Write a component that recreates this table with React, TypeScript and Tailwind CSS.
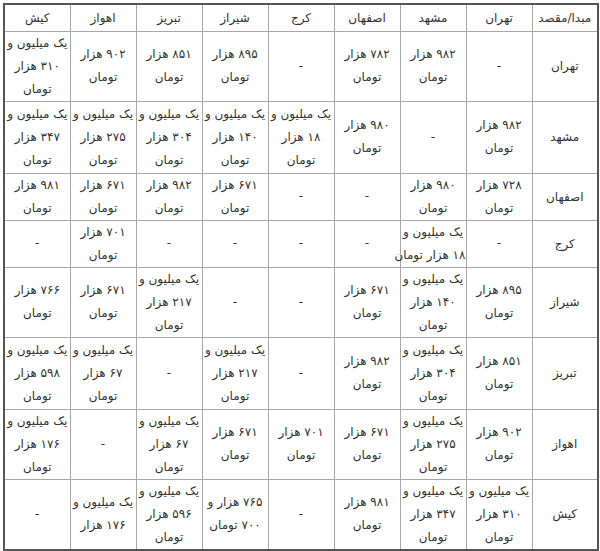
const cities = ["تهران", "مشهد", "اصفهان", "کرج", "شیراز", "تبریز", "اهواز", "کیش"];

// each cell is a list of lines; "-" means no route
const rows: { city: string; h: string; cells: string[][] }[] = [
  {
    city: "تهران",
    h: "h-[69px]",
    cells: [
      ["-"],
      ["۹۸۲ هزار", "تومان"],
      ["۷۸۲ هزار", "تومان"],
      ["-"],
      ["۸۹۵ هزار", "تومان"],
      ["۸۵۱ هزار", "تومان"],
      ["۹۰۲ هزار", "تومان"],
      ["یک میلیون و", "۳۱۰ هزار", "تومان"],
    ],
  },
  {
    city: "مشهد",
    h: "h-[72px]",
    cells: [
      ["۹۸۲ هزار", "تومان"],
      ["-"],
      ["۹۸۰ هزار", "تومان"],
      ["یک میلیون و", "۱۸ هزار", "تومان"],
      ["یک میلیون و", "۱۴۰ هزار", "تومان"],
      ["یک میلیون و", "۳۰۴ هزار", "تومان"],
      ["یک میلیون و", "۲۷۵ هزار", "تومان"],
      ["یک میلیون و", "۳۴۷ هزار", "تومان"],
    ],
  },
  {
    city: "اصفهان",
    h: "h-[46px]",
    cells: [
      ["۷۲۸ هزار", "تومان"],
      ["۹۸۰ هزار", "تومان"],
      ["-"],
      ["-"],
      ["۶۷۱ هزار", "تومان"],
      ["۹۸۲ هزار", "تومان"],
      ["۶۷۱ هزار", "تومان"],
      ["۹۸۱ هزار", "تومان"],
    ],
  },
  {
    city: "کرج",
    h: "h-[47px]",
    cells: [
      ["-"],
      ["یک میلیون و", "۱۸ هزار تومان"],
      ["-"],
      ["-"],
      ["-"],
      ["-"],
      ["۷۰۱ هزار", "تومان"],
      ["-"],
    ],
  },
  {
    city: "شیراز",
    h: "h-[70px]",
    cells: [
      ["۸۹۵ هزار", "تومان"],
      ["یک میلیون و", "۱۴۰ هزار", "تومان"],
      ["۶۷۱ هزار", "تومان"],
      ["-"],
      ["-"],
      ["یک میلیون و", "۲۱۷ هزار", "تومان"],
      ["۶۷۱ هزار", "تومان"],
      ["۷۶۶ هزار", "تومان"],
    ],
  },
  {
    city: "تبریز",
    h: "h-[72px]",
    cells: [
      ["۸۵۱ هزار", "تومان"],
      ["یک میلیون و", "۳۰۴ هزار", "تومان"],
      ["۹۸۲ هزار", "تومان"],
      ["-"],
      ["یک میلیون و", "۲۱۷ هزار", "تومان"],
      ["-"],
      ["یک میلیون و", "۶۷ هزار", "تومان"],
      ["یک میلیون و", "۵۹۸ هزار", "تومان"],
    ],
  },
  {
    city: "اهواز",
    h: "h-[70px]",
    cells: [
      ["۹۰۲ هزار", "تومان"],
      ["یک میلیون و", "۲۷۵ هزار", "تومان"],
      ["۶۷۱ هزار", "تومان"],
      ["۷۰۱ هزار", "تومان"],
      ["۶۷۱ هزار", "تومان"],
      ["یک میلیون و", "۶۷ هزار", "تومان"],
      ["-"],
      ["یک میلیون و", "۱۷۶ هزار", "تومان"],
    ],
  },
  {
    city: "کیش",
    h: "h-[70px]",
    cells: [
      ["یک میلیون و", "۳۱۰ هزار", "تومان"],
      ["یک میلیون و", "۳۴۷ هزار", "تومان"],
      ["۹۸۱ هزار", "تومان"],
      ["-"],
      ["۷۶۵ هزار و", "۷۰۰ تومان"],
      ["یک میلیون و", "۵۹۶ هزار", "تومان"],
      ["یک میلیون و", "۱۷۶ هزار"],
      ["-"],
    ],
  },
];

const cell = "border border-[#a8a8a8] p-0 text-center align-middle";

function Lines({ lines }: { lines: string[] }) {
  return (
    <>
      {lines.map((l, i) => (
        <div key={i} className="whitespace-nowrap leading-[23px]">
          {l}
        </div>
      ))}
    </>
  );
}

export default function App() {
  return (
    <div className="w-[600px] h-[551px] bg-white pt-[3px] pl-[3px]">
      <table
        dir="rtl"
        className="w-[595px] table-fixed border-collapse border-2 border-[#555] text-[12px] text-[#333]"
        style={{ fontFamily: '"DejaVu Sans", sans-serif' }}
      >
        <colgroup>
          {Array.from({ length: 9 }).map((_, i) => (
            <col key={i} className="w-[66px]" />
          ))}
        </colgroup>
        <thead>
          <tr className="h-[27px]">
            <th className={cell + " font-normal"}>مبدا/مقصد</th>
            {cities.map((c) => (
              <th key={c} className={cell + " font-normal"}>
                {c}
              </th>
            ))}
          </tr>
        </thead>
        <tbody>
          {rows.map((r) => (
            <tr key={r.city} className={r.h}>
              <td className={cell}>{r.city}</td>
              {r.cells.map((c, i) => (
                <td key={i} className={cell}>
                  <Lines lines={c} />
                </td>
              ))}
            </tr>
          ))}
        </tbody>
      </table>
    </div>
  );
}
